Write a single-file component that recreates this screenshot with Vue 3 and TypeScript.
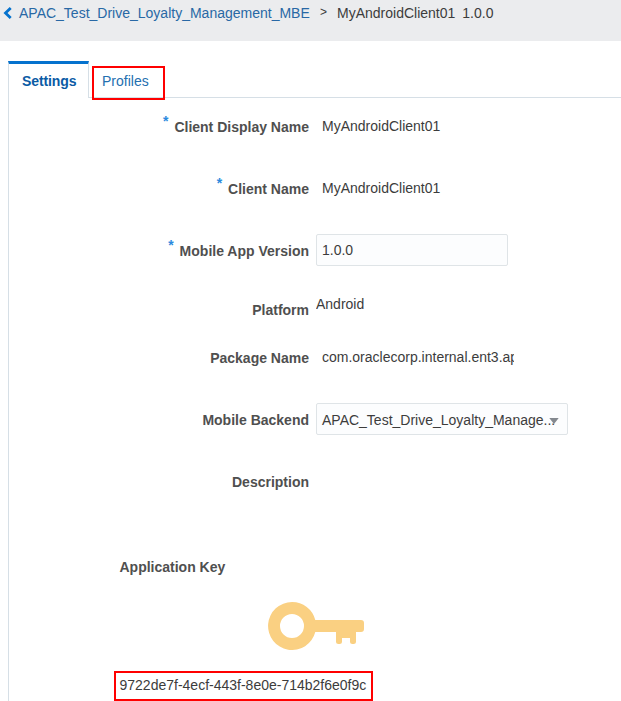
<script setup lang="ts">
interface Field {
  label: string
  value: string
  kind: 'text' | 'input' | 'select' | 'plain'
  size: string
  required?: boolean
}

const fields: Field[] = [
  { label: 'Client Display Name', value: 'MyAndroidClient01', kind: 'text', size: 'regular', required: true },
  { label: 'Client Name', value: 'MyAndroidClient01', kind: 'text', size: 'regular', required: true },
  { label: 'Mobile App Version', value: '1.0.0', kind: 'input', size: 'regular', required: true },
  { label: 'Platform', value: 'Android', kind: 'plain', size: 'medium' },
  { label: 'Package Name', value: 'com.oraclecorp.internal.ent3.ap', kind: 'text', size: 'short' },
  { label: 'Mobile Backend', value: 'APAC_Test_Drive_Loyalty_Manage...', kind: 'select', size: 'tall' },
  { label: 'Description', value: '', kind: 'text', size: 'short' },
]
</script>

<template>
  <div class="page">
    <header class="crumbs">
      <svg class="back" width="9" height="12" viewBox="0 0 9 12">
        <path d="M7.7 1 L2.5 6 L7.7 11" fill="none" stroke="#0572ce" stroke-width="2.8" />
      </svg>
      <a class="parent">APAC_Test_Drive_Loyalty_Management_MBE</a>
      <span class="sep">&gt;</span>
      <span class="current">MyAndroidClient01</span>
      <span class="version">1.0.0</span>
    </header>

    <nav class="tabs">
      <div class="tab active">Settings</div>
      <div class="tab-rest">
        <div class="marked">Profiles</div>
      </div>
    </nav>

    <main class="panel">
      <div v-for="f in fields" :key="f.label" class="row" :class="f.size">
        <label class="label"><span v-if="f.required" class="star">*</span><span>{{ f.label }}</span></label>
        <div class="value" :class="f.kind">
          <span class="value-text">{{ f.value }}</span>
          <svg v-if="f.kind === 'select'" class="arrow" width="10" height="6" viewBox="0 0 10 6">
            <path d="M0.3 0 H9.7 L5 6 Z" fill="#84898f" />
          </svg>
        </div>
      </div>

      <section class="app-key">
        <h2>Application Key</h2>
        <svg class="key" width="96" height="48" viewBox="0 0 96 48">
          <path
            d="M24 0 A24 24 0 1 0 47.3 30 H68 V39.5 Q68 42 70.5 42 H71.5 Q74 42 74 39.5 V36 H82 V39.5 Q82 42 84.5 42 H85.5 Q88 42 88 39.5 V30 H93 Q96 30 96 27 V21 Q96 18 93 18 H47.3 A24 24 0 0 0 24 0 Z M24 12 A12 12 0 1 1 24 36 A12 12 0 1 1 24 12 Z"
            fill="#fad082"
            fill-rule="evenodd"
          />
        </svg>
        <div class="key-value">9722de7f-4ecf-443f-8e0e-714b2f6e0f9c</div>
      </section>
    </main>
  </div>
</template>

<style>
body {
  margin: 0;
  background: #fff;
  overflow: hidden;
}
</style>

<style scoped>
.page {
  box-sizing: border-box;
  width: 621px;
  height: 701px;
  overflow: hidden;
  display: flex;
  flex-direction: column;
  background: #fff;
  color: #3c3c3c;
  font: 14px/16px "Liberation Sans", Arial, sans-serif;
}
.crumbs {
  box-sizing: border-box;
  height: 41px;
  flex: none;
  padding: 5px 0 0 3px;
  display: flex;
  align-items: flex-start;
  background: #ebecee;
  white-space: nowrap;
}
.back {
  margin-top: 2px;
}
.parent {
  width: 291px;
  margin-left: 7px;
  color: #2868a5;
}
.sep {
  width: 17px;
  margin: -1px 0 0 10px;
  font-size: 12px;
}
.version {
  margin-left: 7px;
}
.tabs {
  display: flex;
  flex: none;
  height: 37px;
  margin: 20px 0 0 8px;
}
.tab {
  box-sizing: border-box;
  width: 81px;
  padding: 9px 0 0 13px;
  border: 1px solid #d6dfe6;
  border-top: 3px solid #0572ce;
  border-bottom: 0;
  font-weight: bold;
  letter-spacing: -0.1px;
  color: #0b5ba5;
}
.tab-rest {
  box-sizing: border-box;
  flex: 1;
  padding: 5px 0 0 3px;
  border-bottom: 1px solid #d6dfe6;
}
.marked {
  box-sizing: border-box;
  width: 73px;
  height: 34px;
  padding: 5px 0 0 8px;
  border: 2px solid #f00;
  color: #2470b0;
  position: relative;
}
.panel {
  box-sizing: border-box;
  flex: 1;
  margin-left: 8px;
  border-left: 1px solid #d6dfe6;
}
.row {
  display: grid;
  grid-template-columns: 300px 1fr;
  column-gap: 7px;
  align-items: center;
}
.regular { height: 62px; }
.medium { height: 56px; }
.short { height: 40px; }
.tall { height: 84px; }
.row:first-child {
  height: 58px;
  margin-bottom: 2px;
}
.label {
  display: flex;
  justify-content: flex-end;
  font-weight: bold;
  color: #4f4f4f;
  white-space: nowrap;
}
.star {
  margin: -6px 6px 0 0;
  font-size: 14px;
  color: #2b8ade;
}
.value {
  box-sizing: border-box;
  width: 198px;
  padding: 0 0 2px 6px;
  overflow: hidden;
  white-space: nowrap;
}
.plain {
  padding: 0 0 12px;
}
.input,
.select {
  display: flex;
  align-items: center;
  width: 192px;
  height: 32px;
  padding: 0 5px;
  margin-top: -2px;
  border: 1px solid #dfe4e7;
  border-radius: 2px;
  background: #fcfdfe;
}
.select {
  width: 252px;
  padding-top: 2px;
}
.arrow {
  flex: none;
  margin: 1px 0 0 -6px;
}
.app-key {
  padding: 57px 0 0 105px;
}
h2 {
  width: 120px;
  margin: 0 0 0 5.5px;
  font: bold 14px/16px "Liberation Sans", Arial, sans-serif;
  color: #4f4f4f;
}
.key {
  display: block;
  margin: 27px 0 21px 154px;
}
.key-value {
  box-sizing: border-box;
  width: 259px;
  height: 30px;
  padding: 4px 0 0 3.5px;
  border: 2px solid #f00;
}
</style>
